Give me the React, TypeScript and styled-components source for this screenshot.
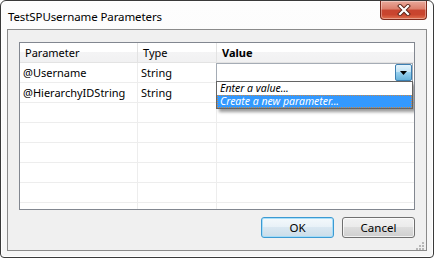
import React from 'react'
import styled, { createGlobalStyle } from 'styled-components'

const GlobalStyle = createGlobalStyle`
  html, body {
    margin: 0;
    padding: 0;
    background: #ffffff;
  }
  body {
    font-family: "Noto Sans", "Open Sans", sans-serif;
    font-size: 11px;
    color: #000;
  }
`

const Window = styled.div`
  box-sizing: border-box;
  width: 434px;
  height: 258px;
  border: 1px solid #3a3a3a;
  border-radius: 6px 6px 4px 4px;
  background: linear-gradient(to bottom, #fdfdfd 0%, #f6f6f6 100%);
  box-shadow: inset 0 0 0 1px #ffffff;
  display: flex;
  flex-direction: column;
  padding: 0 6px 6px 6px;
`

const TitleBar = styled.div`
  height: 28px;
  display: flex;
  justify-content: space-between;
  align-items: flex-start;
  padding-left: 1px;
`

const Title = styled.div`
  margin-top: 8px;
  font-size: 11.5px;
  letter-spacing: -0.1px;
  color: #000;
`

const CloseButton = styled.div`
  box-sizing: border-box;
  width: 47px;
  height: 19px;
  margin-right: 0;
  border: 1px solid #7c2a1c;
  border-top: none;
  border-radius: 0 0 4px 4px;
  background: linear-gradient(
    to bottom,
    #e9a99b 0%,
    #dc7e6b 45%,
    #c74530 50%,
    #c9452e 75%,
    #e0704f 100%
  );
  box-shadow: inset 0 0 0 1px rgba(255, 255, 255, 0.35);
  display: flex;
  align-items: center;
  justify-content: center;
`

const Client = styled.div`
  flex: 1;
  position: relative;
  border: 1px solid #8a8a8a;
  background: #f0f0f0;
  padding: 12px 11px 12px 11px;
  display: flex;
  flex-direction: column;
`

const GridBox = styled.div`
  position: relative;
  box-sizing: border-box;
  height: 168px;
  border: 1px solid #828790;
  background: #ffffff;
  overflow: hidden;
`

const Row = styled.div<{ $header?: boolean }>`
  display: grid;
  grid-template-columns: 118px 79px 1fr;
  height: 20px;
  box-sizing: border-box;
  border-bottom: 1px solid ${(p) => (p.$header ? '#e3e3e3' : '#ededed')};
  background: ${(p) =>
    p.$header
      ? 'linear-gradient(to bottom, #ffffff 0%, #ffffff 45%, #f4f4f5 46%, #f1f1f2 100%)'
      : '#ffffff'};
`

const Cell = styled.div<{ $header?: boolean; $bold?: boolean; $last?: boolean }>`
  box-sizing: border-box;
  border-right: ${(p) => (p.$last ? 'none' : `1px solid ${p.$header ? '#e3e3e3' : '#ededed'}`)};
  padding-left: ${(p) => (p.$header ? '5px' : '3px')};
  font-weight: ${(p) => (p.$bold ? 700 : 400)};
  line-height: 19px;
  white-space: nowrap;
  overflow: hidden;
`

const Combo = styled.div`
  position: absolute;
  left: 196px;
  top: 20px;
  width: 197px;
  height: 19px;
  box-sizing: border-box;
  border: 1px solid #a5acb5;
  background: #ffffff;
  display: flex;
  justify-content: flex-end;
`

const ComboButton = styled.div`
  width: 17px;
  height: 17px;
  box-sizing: border-box;
  border: 1px solid #3c7fb1;
  border-radius: 2px;
  background: linear-gradient(
    to bottom,
    #e5f4fc 0%,
    #c4e5f6 45%,
    #98d1ef 50%,
    #68b3db 100%
  );
  display: flex;
  align-items: center;
  justify-content: center;
`

const DropList = styled.div`
  position: absolute;
  left: 196px;
  top: 38px;
  width: 197px;
  box-sizing: border-box;
  border: 1px solid #646464;
  background: #ffffff;
  box-shadow: 3px 3px 3px rgba(0, 0, 0, 0.4);
`

const DropItem = styled.div<{ $selected?: boolean }>`
  height: 13px;
  box-sizing: border-box;
  line-height: 11px;
  padding-left: 2px;
  font-style: italic;
  font-size: 10.5px;
  white-space: nowrap;
  overflow: hidden;
  color: ${(p) => (p.$selected ? '#ffffff' : '#000000')};
  background: ${(p) => (p.$selected ? '#3399ff' : 'transparent')};
  border: 1px ${(p) => (p.$selected ? 'dotted #cc8844' : 'solid transparent')};
`

const ButtonRow = styled.div`
  margin-top: 7px;
  display: flex;
  justify-content: flex-end;
  gap: 8px;
`

const Button = styled.div<{ $default?: boolean }>`
  width: 73px;
  height: 21px;
  box-sizing: border-box;
  border: 1px solid ${(p) => (p.$default ? '#3c9ad2' : '#707070')};
  border-radius: 3px;
  background: ${(p) =>
    p.$default
      ? 'linear-gradient(to bottom, #f4f9fc 0%, #e8f1f7 48%, #d9e7f1 50%, #cbdde9 100%)'
      : 'linear-gradient(to bottom, #f2f2f2 0%, #ebebeb 48%, #dddddd 50%, #cfcfcf 100%)'};
  box-shadow: inset 0 0 0 1px
    ${(p) => (p.$default ? 'rgba(160, 220, 250, 0.9)' : 'rgba(255, 255, 255, 0.7)')};
  display: flex;
  align-items: center;
  justify-content: center;
  font-size: 11.5px;
`

const Grip = styled.div`
  position: absolute;
  right: 1px;
  bottom: 1px;
  width: 10px;
  height: 10px;
`

const rows = [
  { name: '@Username', type: 'String' },
  { name: '@HierarchyIDString', type: 'String' },
  { name: '', type: '' },
  { name: '', type: '' },
  { name: '', type: '' },
  { name: '', type: '' },
  { name: '', type: '' },
  { name: '', type: '' },
]

const CloseGlyph = () => (
  <svg width="14" height="12" viewBox="0 0 14 12">
    <path d="M3 2 L11 10 M11 2 L3 10" stroke="#5a2418" strokeWidth="4" strokeLinecap="square" />
    <path d="M3 2 L11 10 M11 2 L3 10" stroke="#ffffff" strokeWidth="2.2" strokeLinecap="square" />
  </svg>
)

const GripDots = () => (
  <svg width="10" height="10" viewBox="0 0 10 10">
    {[
      [7, 1],
      [4, 4],
      [7, 4],
      [1, 7],
      [4, 7],
      [7, 7],
    ].map(([x, y]) => (
      <rect key={`${x}-${y}`} x={x} y={y} width="2" height="2" fill="#b8b8b8" />
    ))}
  </svg>
)

const App: React.FC = () => {
  return (
    <>
      <GlobalStyle />
      <Window>
        <TitleBar>
          <Title>TestSPUsername Parameters</Title>
          <CloseButton>
            <CloseGlyph />
          </CloseButton>
        </TitleBar>
        <Client>
          <GridBox>
            <Row $header>
              <Cell $header>Parameter</Cell>
              <Cell $header>Type</Cell>
              <Cell $header $bold $last>
                Value
              </Cell>
            </Row>
            {rows.map((r, i) => (
              <Row key={i}>
                <Cell>{r.name}</Cell>
                <Cell>{r.type}</Cell>
                <Cell $last />
              </Row>
            ))}
            <Combo>
              <ComboButton>
                <svg width="7" height="4" viewBox="0 0 7 4">
                  <path d="M0 0 L7 0 L3.5 4 Z" fill="#000" />
                </svg>
              </ComboButton>
            </Combo>
            <DropList>
              <DropItem>Enter a value...</DropItem>
              <DropItem $selected>Create a new parameter...</DropItem>
            </DropList>
          </GridBox>
          <ButtonRow>
            <Button $default>OK</Button>
            <Button>Cancel</Button>
          </ButtonRow>
          <Grip>
            <GripDots />
          </Grip>
        </Client>
      </Window>
    </>
  )
}

export default App
